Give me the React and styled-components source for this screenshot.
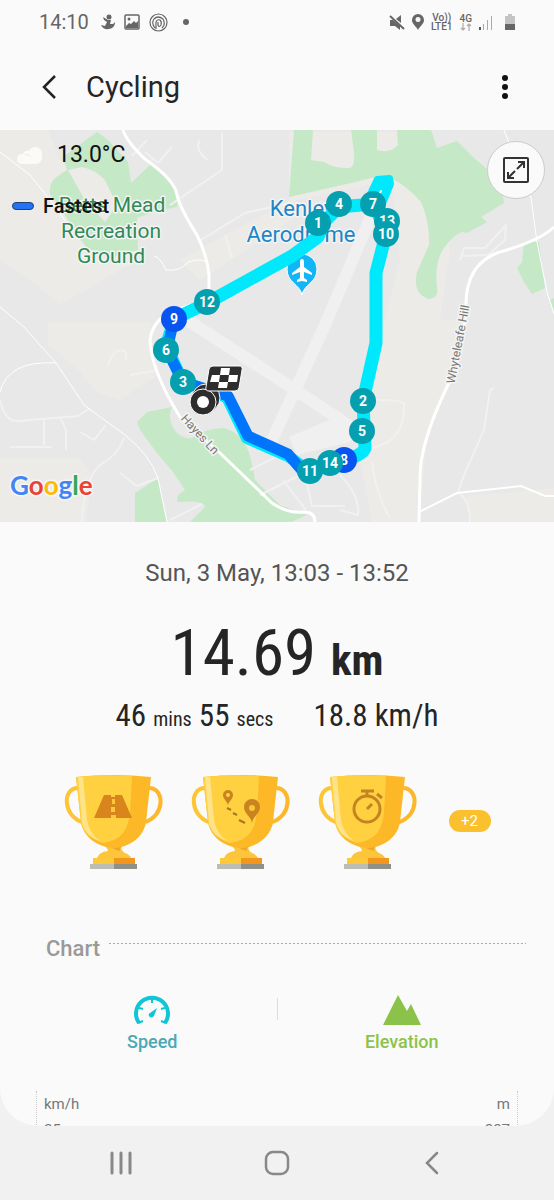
import React from 'react'
import styled, { createGlobalStyle } from 'styled-components'

const GlobalStyle = createGlobalStyle`
  * {
    box-sizing: border-box;
  }
  body {
    margin: 0;
    background: #f1f1f1;
    font-family: Roboto, sans-serif;
    color: #252525;
  }
  button {
    border: 0;
    padding: 0;
    background: none;
    font: inherit;
    color: inherit;
  }
  svg {
    display: block;
  }
`

const condensed = `'Roboto Condensed', Roboto, sans-serif`

const Page = styled.div`
  display: flex;
  flex-direction: column;
  height: 100vh;
`

const Screen = styled.main`
  flex: 1;
  min-height: 0;
  overflow: hidden;
  background: #fafafa;
  border-radius: 0 0 38px 38px;
`

const StatusBar = styled.div`
  display: flex;
  align-items: center;
  justify-content: space-between;
  height: 44px;
  padding: 0 38px 0 39px;
  color: #666;
`

const StatusGroup = styled.div`
  display: flex;
  align-items: center;
  gap: ${props => props.gap}px;
`

const Clock = styled.span`
  font-size: 20px;
  line-height: 24px;
  margin-right: 3px;
`

const NetworkLabel = styled.span`
  display: flex;
  flex-direction: column;
  align-items: center;
  font-size: 10px;
  line-height: 9px;
  font-weight: 500;
`

const AppBar = styled.header`
  display: flex;
  align-items: center;
  height: 86px;
  padding: 0 36px;
`

const IconButton = styled.button`
  display: flex;
  align-items: center;
  justify-content: center;
  width: 26px;
  height: 40px;
`

const Title = styled.h1`
  flex: 1;
  margin: 0 0 0 24px;
  font-size: 29px;
  line-height: 36px;
  font-weight: 400;
`

const MapArea = styled.section`
  position: relative;
`

const MapOverlay = styled.div`
  position: absolute;
  top: 11px;
  left: 12px;
  color: #111;
`

const Weather = styled.div`
  display: flex;
  align-items: center;
  gap: 13px;
  padding-left: 4px;
  font-size: 23px;
  line-height: 28px;
`

const Legend = styled.div`
  display: flex;
  align-items: center;
  gap: 9px;
  margin-top: 25px;
  font-size: 20px;
  line-height: 24px;
  font-weight: 500;
`

const LegendSwatch = styled.span`
  width: 22px;
  height: 8px;
  border: 1px solid #24416f;
  border-radius: 4px;
  background: #2472f5;
`

const ExpandButton = styled.button`
  position: absolute;
  top: 11px;
  right: 9px;
  display: flex;
  align-items: center;
  justify-content: center;
  width: 58px;
  height: 58px;
  border: 1px solid #ccc;
  border-radius: 50%;
  background: #fafafa;
`

const Summary = styled.section`
  display: flex;
  flex-direction: column;
  align-items: center;
`

const DateLine = styled.div`
  margin-top: 37px;
  font-size: 24px;
  line-height: 28px;
  color: #555;
`

const Distance = styled.div`
  margin-top: 28px;
  font-family: ${condensed};
  font-size: 65px;
  line-height: 76px;
  font-weight: 400;
`

const DistanceUnit = styled.span`
  font-size: 43px;
  font-weight: 700;
`

const Stats = styled.div`
  display: flex;
  align-items: baseline;
  gap: 40px;
  font-family: ${condensed};
  font-size: 31px;
  line-height: 36px;
`

const SmallUnit = styled.span`
  font-size: 20px;
`

const Trophies = styled.div`
  display: flex;
  align-items: center;
  justify-content: center;
  gap: 28px;
  margin-top: 35px;
`

const MoreBadge = styled.button`
  width: 42px;
  height: 22px;
  margin-left: 4px;
  border-radius: 11px;
  background: #fbc02d;
  color: #fff;
  font-size: 15px;
  line-height: 22px;
`

const ChartHeading = styled.div`
  display: flex;
  align-items: flex-start;
  gap: 9px;
  margin: 65px 28px 0 46px;
`

const ChartTitle = styled.h2`
  margin: 0;
  font-size: 22px;
  line-height: 28px;
  font-weight: 500;
  color: #999;
`

const DottedLine = styled.span`
  flex: 1;
  height: 1px;
  margin-top: 8px;
  background: repeating-linear-gradient(90deg, #aaa 0 2px, transparent 2px 4px);
`

const Series = styled.div`
  display: flex;
  align-items: flex-start;
  margin: 31px 28px 0;
`

const SeriesButton = styled.button`
  display: flex;
  flex: 1;
  flex-direction: column;
  align-items: center;
  gap: 5px;
  font-size: 18px;
  line-height: 22px;
  font-weight: 500;
  color: ${props => props.tone};
`

const Separator = styled.span`
  width: 1px;
  height: 22px;
  margin-top: 4px;
  background: #ddd;
`

const ChartArea = styled.div`
  display: flex;
  justify-content: space-between;
  margin: 38px 36px 0;
  padding: 0 7px;
  border: 1px dotted #ccc;
  border-width: 0 1px;
  font-size: 15px;
  line-height: 26px;
  color: #777;
`

const AxisLabels = styled.div`
  display: flex;
  flex-direction: column;
  text-align: ${props => props.align};
`

const NavBar = styled.nav`
  display: flex;
  align-items: center;
  justify-content: space-between;
  height: 74px;
  padding: 0 107px 0 106px;
`

const NavButton = styled(IconButton)`
  width: 30px;
`

const kilometres = [
  { n: 13, x: 387, y: 91 },
  { n: 10, x: 386, y: 104 },
  { n: 7, x: 373, y: 74 },
  { n: 4, x: 339, y: 74 },
  { n: 1, x: 318, y: 93 },
  { n: 12, x: 207, y: 172 },
  { n: 9, x: 174, y: 189, fast: true },
  { n: 6, x: 166, y: 220 },
  { n: 3, x: 183, y: 252 },
  { n: 2, x: 363, y: 271 },
  { n: 5, x: 362, y: 301 },
  { n: 8, x: 344, y: 330, fast: true },
  { n: 14, x: 330, y: 333 },
  { n: 11, x: 310, y: 341 },
]

const PlaceText = styled.text`
  font-family: Roboto, sans-serif;
  font-size: ${props => props.size}px;
  fill: ${props => props.tone};
  stroke: #f4f4f2;
  stroke-width: 3px;
  stroke-linejoin: round;
  paint-order: stroke;
  text-anchor: middle;
`

const MarkerText = styled.text`
  font-family: Roboto, sans-serif;
  font-size: 14px;
  font-weight: 700;
  fill: #fff;
  text-anchor: middle;
`

const GoogleText = styled.text`
  font-family: Lato, sans-serif;
  font-size: 26px;
  font-weight: 700;
  stroke: #f6f6f6;
  stroke-width: 3px;
  stroke-linejoin: round;
  paint-order: stroke;
`

const RouteMap = () => (
  <svg viewBox='0 0 554 392' width='100%' role='img' aria-label='Route map'>
    <rect width='554' height='392' fill='#e8e8e8' />
    {/* open land */}
    <g fill='#ecebe7'>
      <path d='M0 0H48L60 30L80 50L110 80L140 90L138 130L120 140L60 175L30 150L0 130Z' />
      <path d='M48 192L150 192L158 245L120 270L96 262L78 240L48 215Z' />
      <path d='M0 328L80 328L92 345L86 392H0Z' />
      <path d='M289 2H430L450 120L440 190L470 190L447 257L427 307L419 392H372L360 330L372 260L384 195L400 130L391 50L289 72Z' />
      <path d='M466 366L554 358V392H472Z' />
      <path d='M180 130L290 70L310 78L200 150Z' />
    </g>
    {/* parks and woods */}
    <g fill='#c5e8c6'>
      <path d='M97 2L108 10L128 32L131 53L150 35Q168 48 173 58L178 70L177 77L157 81L137 88L138 120L110 128L87 118L77 105L63 82L50 64Q49 54 55 48L67 40L63 27Z' />
      <path d='M294 0L289 67L351 53L371 48H391Q407 56 421 72Q430 92 429 115L417 142Q412 164 429 169Q439 168 437 158Q434 132 444 118Q452 106 462 102L467 103L487 92L481 87L504 73L500 50L474 28L457 11L437 18L431 0H397L398 15Q390 24 377 20V0H351L354 22Q356 40 346 38Q334 38 324 32L311 30L313 0Z' />
      <path d='M524 112H539L545 158L532 164L524 152L517 138L522 132Z' />
      <path d='M554 168L550 170L554 182Z' />
      <path d='M137 292L147 282L172 277Q166 290 177 303Q186 310 192 308Q204 299 222 298Q238 300 247 318Q252 330 255 350L280 375L307 385L291 392H190L205 377Q204 370 177 372L178 365L185 360L173 342L157 323L140 300Z' />
      <path d='M135 363L158 348L167 392H135Z' />
    </g>
    <path d='M68 40L82 37Q96 40 105 50L117 75L105 92L86 72Z' fill='#ecebe7' />
    {/* runways */}
    <g fill='none' stroke='#f0f0f0' strokeWidth='12'>
      <path d='M380 65L325 195L272 310' />
      <path d='M184 188L280 250L350 296' />
    </g>
    <path d='M289 307L341 285L357 300L350 312L297 325Z' fill='#f0f0f0' />
    {/* lanes */}
    <g fill='none' stroke='#f1f1f1' strokeWidth='2'>
      <path d='M132 26L147 10M145 22L158 33L172 17M170 75L210 48L222 40V2M208 30Q194 20 200 10' />
      <path d='M201 110L245 83L290 73M225 105L232 128' />
      <path d='M0 270Q5 292 18 291L78 286L90 278M44 288V315M60 287L66 300V320M10 317H52M80 302L94 310L106 295' />
      <path d='M108 235Q115 215 126 222V230M130 245L158 240M124 308Q118 325 100 335Q84 350 82 392M120 343L137 356L158 348' />
      <path d='M378 270Q402 270 404 274Q405 300 388 312L368 320M340 345Q360 365 358 385L340 380M372 332Q376 365 390 388' />
      <path d='M494 258L490 260L484 300L464 345L458 362Q470 370 470 392' />
      <path d='M460 130L464 118L485 118L506 95L505 110L488 125L462 126' />
      <path d='M250 340L280 325M260 365L300 345M283 350L306 380M305 345L312 376H345' />
      <path d='M170 390L202 374' />
    </g>
    <g fill='none' stroke='#fff' strokeWidth='2'>
      <path d='M0 22L30 45L50 70L66 92M154 126Q160 127 166 140Q180 142 188 132Q200 128 207 132' strokeWidth='1' />
      <path d='M0 177L24 197L56 233L84 275L125 305Q150 325 158 348L167 392M56 233Q8 230 0 262' strokeWidth='1' />
      <path d='M504 0L531 68L537 112L547 162L554 184' strokeWidth='1' />
      <path d='M419 382L457 363L521 356L545 366H554' />
    </g>
    <g fill='none' stroke='#fff' strokeWidth='3'>
      <path d='M123 0Q127 12 145 29Q175 50 177 65Q181 80 197 105Q207 125 209 145V165Q195 175 176 180Q153 188 150 210Q151 240 180 287L220 323L272 373Q288 384 304 382Q315 382 315 392' />
      <path d='M554 97Q542 109 507 120Q466 129 466 175Q464 225 447 257Q419 315 420 350L419 392' />
    </g>
    <PlaceText size='21' tone='#2f8a57' x='112' y='82'>Betts Mead</PlaceText>
    <PlaceText size='21' tone='#2f8a57' x='111' y='108'>Recreation</PlaceText>
    <PlaceText size='21' tone='#2f8a57' x='111' y='133'>Ground</PlaceText>
    <PlaceText size='22' tone='#1b86c8' x='302' y='86'>Kenley</PlaceText>
    <PlaceText size='22' tone='#1b86c8' x='301' y='112'>Aerodrome</PlaceText>
    <PlaceText size='12' tone='#777' transform='translate(197 307) rotate(47)'>Hayes Ln</PlaceText>
    <PlaceText size='12' tone='#777' transform='translate(462 215) rotate(-79)'>Whyteleafe Hill</PlaceText>
    {/* airport pin */}
    <path d='M302 165C300 154 287 153 287 139A15 15 0 0 1 317 139C317 153 304 154 302 165Z' fill='#12b5f5' stroke='#fff' strokeWidth='1' />
    <path d='M302 129Q304 129 304 132V137L312 143V145L304 142V148L307 150V152L302 151L297 152V150L300 148V142L292 145V143L300 137V132Q300 129 302 129Z' fill='#fff' />
    {/* ridden route */}
    <g fill='none' strokeLinecap='round' strokeLinejoin='round'>
      <path d='M174 189L207 173L292 126L318 107L324 92L339 77L373 74' stroke='#00e9fc' strokeWidth='13' />
      <path d='M368 68L377 49L390 48L391 54L382 76L377 90Z' fill='#00e9fc' stroke='#00e9fc' strokeWidth='6' />
      <path d='M386 104L376 143V213L363 271L365 318Q363 325 345 330' stroke='#00e9fc' strokeWidth='13' />
      <path d='M377 69L381 61' stroke='#e6fbef' strokeWidth='2' />
      <path d='M174 189L166 215L183 252L227 267L247 308L288 326L310 342' stroke='#00e9fc' strokeWidth='12' />
      <path d='M174 189L167 220L183 252L228 266L248 306L288 324L305 344' stroke='#0075fb' strokeWidth='11' />
    </g>
    {kilometres.map(({ n, x, y, fast }) => (
      <g key={n}>
        <circle cx={x} cy={y} r='13' fill={fast ? '#0754f0' : '#05a0b0'} />
        <MarkerText x={x} y={y + 5}>{n}</MarkerText>
      </g>
    ))}
    {/* start and finish */}
    <circle cx='206' cy='268' r='14' fill='#2d2d2d' stroke='#fff' strokeWidth='1' />
    <circle cx='203' cy='272' r='13' fill='#2d2d2d' stroke='#fff' strokeWidth='1' />
    <circle cx='203' cy='272' r='6' fill='#fff' />
    <path d='M213 236H239Q243 236 242 240L239 258Q238 261 235 261H209Q205 261 206 257L209 239Q210 236 213 236Z' fill='#2d2d2d' stroke='#fff' strokeWidth='1' />
    <path d='M221 238H230L229 245H220ZM212 245H220L219 252H210ZM229 245H238L237 252H228ZM219 252H228L227 258H218Z' fill='#fff' />
    <GoogleText x='10' y='365'>
      <tspan fill='#4285f4'>G</tspan>
      <tspan fill='#ea4335'>o</tspan>
      <tspan fill='#fbbc05'>o</tspan>
      <tspan fill='#4285f4'>g</tspan>
      <tspan fill='#34a853'>l</tspan>
      <tspan fill='#ea4335'>e</tspan>
    </GoogleText>
  </svg>
)

const Trophy = ({ label, children }) => (
  <svg width='99' height='98' viewBox='0 0 99 98' role='img' aria-label={label}>
    <g fill='none' strokeWidth='4'>
      <path d='M14 16C-2 16 -1 44 18 50' stroke='#fdc536' />
      <path d='M85 16C101 16 101 44 81 50' stroke='#fdb72b' />
    </g>
    <path d='M41 74H58Q56 78 61 81Q66 83 67 86H33Q35 80 44 79Q44 77 41 74Z' fill='#fdc63a' />
    <path d='M47 75H57Q55 77 56 79L50 77Z' fill='#eda52c' />
    <path d='M12 5Q49 1 87 5L82 50C80 64 67 75 50 76C32 75 19 64 17 50Z' fill='#fdb827' />
    <path d='M12 5Q40 2 68 4L66 40C64 58 58 68 39 71C27 67 19 61 17 50Z' fill='#ffd040' />
    <path d='M14 5L19 5L23 48Q25 61 36 69Q21 64 18 50Z' fill='#ffe389' />
    <path d='M29 86H50V92H29Z' fill='#fdc93b' />
    <path d='M50 86H71V92H50Z' fill='#f3961e' />
    <path d='M26 92H50V97H26Z' fill='#bdbdb3' />
    <path d='M50 92H73V97H50Z' fill='#8f9187' />
    {children}
  </svg>
)

const RoadMark = () => (
  <g>
    <path d='M40 23H47V25H51V23H58L68 46H30Z' fill='#d8861c' />
    <path d='M48 27H51V32H48ZM47 35H51V40H47ZM47 43H52V46H47Z' fill='#ffc83c' />
  </g>
)

const PinsMark = () => (
  <g>
    <path d='M37 33C36 29 32 27 32 23A5 5 0 0 1 42 23C42 27 38 29 37 33Z' fill='#c98420' />
    <circle cx='37' cy='23' r='2' fill='#ffd040' />
    <path d='M61 51C60 44 53 42 53 35A8 8 0 0 1 69 35C69 42 62 44 61 51Z' fill='#c98420' />
    <circle cx='61' cy='36' r='3' fill='#ffc53a' />
    <path d='M36 36L40 38M42 41L46 43M48 48L54 51' stroke='#a87721' strokeWidth='2' fill='none' />
  </g>
)

const StopwatchMark = () => (
  <g fill='none' stroke='#c58420' strokeWidth='3'>
    <circle cx='49' cy='37' r='13' />
    <path d='M43 19H56M49 19V24M59 22L64 26M49 37L54 32' />
  </g>
)

const MuteIcon = () => (
  <svg width='16' height='17' viewBox='0 0 16 17'>
    <path d='M1 6H4L11 12V16L6 12H1ZM7 5L12 1V9Z' fill='#666' />
    <path d='M1 2L15 15' stroke='#666' strokeWidth='2' />
  </svg>
)

const PinIcon = () => (
  <svg width='12' height='16' viewBox='0 0 12 16'>
    <path fillRule='evenodd' d='M6 16C4 12 0 10 0 6A6 6 0 0 1 12 6C12 10 8 12 6 16ZM6 3A2.5 2.5 0 1 0 6 8A2.5 2.5 0 1 0 6 3Z' fill='#666' />
  </svg>
)

const StatusIcons = () => (
  <StatusBar>
    <StatusGroup gap='9'>
      <Clock>14:10</Clock>
      <svg width='14' height='16' viewBox='0 0 14 16' fill='#666'>
        <circle cx='8' cy='3' r='2.5' />
        <path d='M2 3L7 6H10L9 10L12 10L14 8Q14 14 8 15Q2 16 0 11L4 12L6 8L3 6Z' />
      </svg>
      <svg width='16' height='16' viewBox='0 0 16 16'>
        <rect x='1' y='1' width='14' height='14' rx='1' fill='none' stroke='#666' strokeWidth='1.5' />
        <circle cx='5' cy='5' r='1.5' fill='#666' />
        <path d='M2 12L5 9L7 10L10 7L12 9L14 7V14H2Z' fill='#666' />
      </svg>
      <svg width='19' height='19' viewBox='0 0 19 19' fill='none' stroke='#666' strokeWidth='1.2'>
        <circle cx='9.500' cy='9.500' r='8.500' />
        <path d='M6 15Q2 10 5 6Q9 2 14 6Q17 11 13 15M7 16V9Q8 6 11 7Q13 9 12 12Q10 15 9 12V9' />
      </svg>
      <svg width='19' height='8' viewBox='0 0 19 8'>
        <circle cx='9' cy='4' r='3' fill='#666' />
      </svg>
    </StatusGroup>
    <StatusGroup gap='11'>
      <StatusGroup gap='7'>
        <MuteIcon />
        <PinIcon />
        <NetworkLabel>
          <span>Vo))</span>
          <span>LTE1</span>
        </NetworkLabel>
        <NetworkLabel>
          <span>4G</span>
          <svg width='12' height='8' viewBox='0 0 12 8' fill='none' stroke='#aaa' strokeWidth='1.2'>
            <path d='M3 0V7M1 5L3 7L5 5M9 8V1M7 3L9 1L11 3' />
          </svg>
        </NetworkLabel>
        <svg width='14' height='15' viewBox='0 0 14 15'>
          <path d='M0 12H2V15H0Z' fill='#555' />
          <path d='M4 9H5V15H4ZM8 5H9V15H8ZM12 1H13V15H12Z' fill='#aaa' />
        </svg>
      </StatusGroup>
      <svg width='12' height='16' viewBox='0 0 12 16'>
        <path d='M4 0H8V2H11V10H1V2H4Z' fill='#c4c4c4' />
        <path d='M1 10H11V16H1Z' fill='#666' />
      </svg>
    </StatusGroup>
  </StatusBar>
)

const App = () => (
  <Page>
    <GlobalStyle />
    <Screen>
      <StatusIcons />
      <AppBar>
        <IconButton aria-label='Back'>
          <svg width='16' height='26' viewBox='0 0 16 26' fill='none' stroke='#222' strokeWidth='2.500'>
            <path d='M14 2L3 13L14 24' />
          </svg>
        </IconButton>
        <Title>Cycling</Title>
        <IconButton aria-label='More options'>
          <svg width='8' height='26' viewBox='0 0 8 26' fill='#111'>
            <circle cx='4' cy='4' r='3' />
            <circle cx='4' cy='13' r='3' />
            <circle cx='4' cy='22' r='3' />
          </svg>
        </IconButton>
      </AppBar>
      <MapArea>
        <RouteMap />
        <MapOverlay>
          <Weather>
            <svg width='28' height='20' viewBox='0 0 28 20'>
              <path d='M6 19Q1 19 1 14Q1 9 7 9Q9 5 13 6Q16 1 21 2Q27 4 26 12Q26 18 20 19Z' fill='#fbfaf8' />
              <path d='M9 10Q13 8 15 12' fill='none' stroke='#ece8e2' strokeWidth='1' />
            </svg>
            <span>13.0°C</span>
          </Weather>
          <Legend>
            <LegendSwatch />
            <span>Fastest</span>
          </Legend>
        </MapOverlay>
        <ExpandButton aria-label='Expand map'>
          <svg width='26' height='26' viewBox='0 0 26 26' fill='none' stroke='#333' strokeWidth='2'>
            <rect x='1' y='1' width='24' height='24' rx='1' />
            <path d='M15 5H21V11M21 5L14 12M5 15V21H11M5 21L12 14' />
          </svg>
        </ExpandButton>
      </MapArea>
      <Summary>
        <DateLine>Sun, 3 May, 13:03 - 13:52</DateLine>
        <Distance>
          14.69 <DistanceUnit>km</DistanceUnit>
        </Distance>
        <Stats>
          <span>
            46 <SmallUnit>mins</SmallUnit> 55 <SmallUnit>secs</SmallUnit>
          </span>
          <span>18.8 km/h</span>
        </Stats>
      </Summary>
      <Trophies>
        <Trophy label='Longest duration'>
          <RoadMark />
        </Trophy>
        <Trophy label='Longest distance'>
          <PinsMark />
        </Trophy>
        <Trophy label='Best time'>
          <StopwatchMark />
        </Trophy>
        <MoreBadge>+2</MoreBadge>
      </Trophies>
      <ChartHeading>
        <ChartTitle>Chart</ChartTitle>
        <DottedLine />
      </ChartHeading>
      <Series>
        <SeriesButton tone='#4ba9b5'>
          <svg width='38' height='32' viewBox='0 0 38 32'>
            <path d='M6 29A16 16 0 1 1 32 29' fill='none' stroke='#0fc5d6' strokeWidth='4' />
            <path d='M19 4V9M6 14L10 15M32 14L28 15M5 29L10 27M33 29L28 27' stroke='#0fc5d6' strokeWidth='2' />
            <path d='M24 14L21 22Q18 25 16 22Q15 20 17 19Z' fill='#0fc5d6' />
          </svg>
          Speed
        </SeriesButton>
        <Separator />
        <SeriesButton tone='#8bc34a'>
          <svg width='38' height='32' viewBox='0 0 38 32'>
            <path d='M0 31L15 1L24 17L28 10L38 31Z' fill='#8bc34a' />
          </svg>
          Elevation
        </SeriesButton>
      </Series>
      <ChartArea>
        <AxisLabels align='left'>
          <span>km/h</span>
          <span>25</span>
        </AxisLabels>
        <AxisLabels align='right'>
          <span>m</span>
          <span>227</span>
        </AxisLabels>
      </ChartArea>
    </Screen>
    <NavBar>
      <NavButton aria-label='Recent apps'>
        <svg width='24' height='26' viewBox='0 0 24 26' stroke='#888' strokeWidth='3' strokeLinecap='round'>
          <path d='M3 3V23M12 3V23M21 3V23' />
        </svg>
      </NavButton>
      <NavButton aria-label='Home'>
        <svg width='26' height='26' viewBox='0 0 26 26' fill='none' stroke='#888' strokeWidth='2.500'>
          <rect x='2' y='2' width='22' height='22' rx='7' />
        </svg>
      </NavButton>
      <NavButton aria-label='Back'>
        <svg width='16' height='26' viewBox='0 0 16 26' fill='none' stroke='#888' strokeWidth='2.500' strokeLinecap='round'>
          <path d='M13 3L3 13L13 23' />
        </svg>
      </NavButton>
    </NavBar>
  </Page>
)

export default App
